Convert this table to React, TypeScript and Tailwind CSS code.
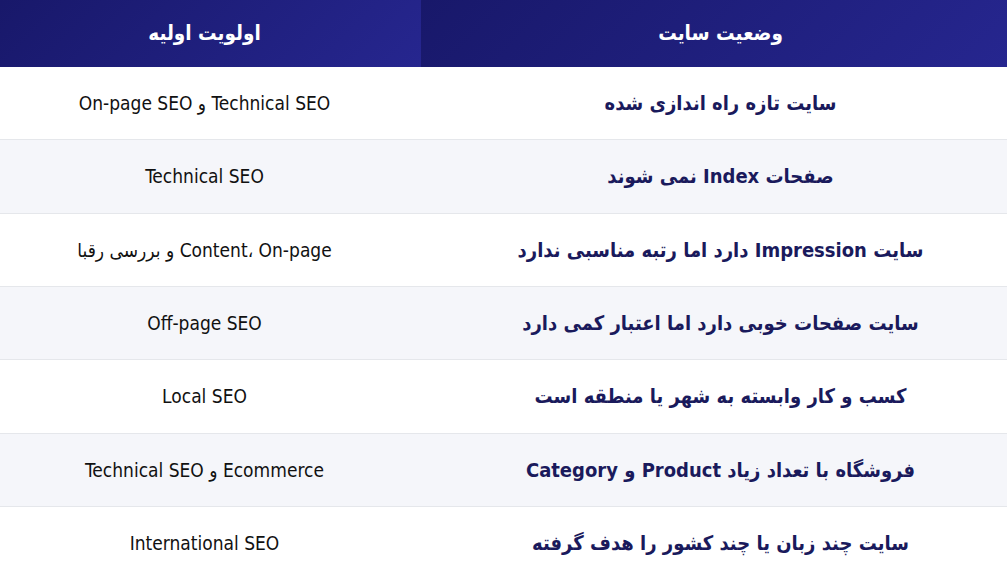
import React from "react";

const rows: [string, string][] = [
  ["سایت تازه راه اندازی شده", "Technical SEO و On-page SEO"],
  ["صفحات Index نمی شوند", "Technical SEO"],
  ["سایت Impression دارد اما رتبه مناسبی ندارد", "Content، On-page و بررسی رقبا"],
  ["سایت صفحات خوبی دارد اما اعتبار کمی دارد", "Off-page SEO"],
  ["کسب و کار وابسته به شهر یا منطقه است", "Local SEO"],
  ["فروشگاه با تعداد زیاد Product و Category", "Ecommerce و Technical SEO"],
  ["سایت چند زبان یا چند کشور را هدف گرفته", "International SEO"],
];

export default function App() {
  return (
    <div
      dir="rtl"
      className="w-[1007px] h-[567px] overflow-hidden bg-white font-['DejaVu_Sans_Condensed','DejaVu_Sans',sans-serif]"
    >
      <div className="grid grid-cols-[586px_421px]">
        <div className="h-[67px] pl-[13px] flex items-center justify-center text-white font-bold text-[20.5px] bg-[linear-gradient(135deg,#18186a,#26268f)]">
          وضعیت سایت
        </div>
        <div className="h-[67px] pr-[12px] flex items-center justify-center text-white font-bold text-[20.5px] bg-[linear-gradient(135deg,#18186a,#26268f)]">
          اولویت اولیه
        </div>
        {rows.map(([a, b], i) => (
          <React.Fragment key={i}>
            <div
              className={
                i % 2 === 1
                  ? "h-[73.33px] pl-[13px] flex items-center justify-center border-b border-[#e5e7eb] text-[#1a1a5c] font-bold text-[20px] bg-[#f5f6fa]"
                  : "h-[73.33px] pl-[13px] flex items-center justify-center border-b border-[#e5e7eb] text-[#1a1a5c] font-bold text-[20px] bg-white"
              }
            >
              {a}
            </div>
            <div
              className={
                i % 2 === 1
                  ? "h-[73.33px] pr-[12px] flex items-center justify-center border-b border-[#e5e7eb] text-[#111111] text-[19px] bg-[#f5f6fa]"
                  : "h-[73.33px] pr-[12px] flex items-center justify-center border-b border-[#e5e7eb] text-[#111111] text-[19px] bg-white"
              }
            >
              {b}
            </div>
          </React.Fragment>
        ))}
      </div>
    </div>
  );
}
